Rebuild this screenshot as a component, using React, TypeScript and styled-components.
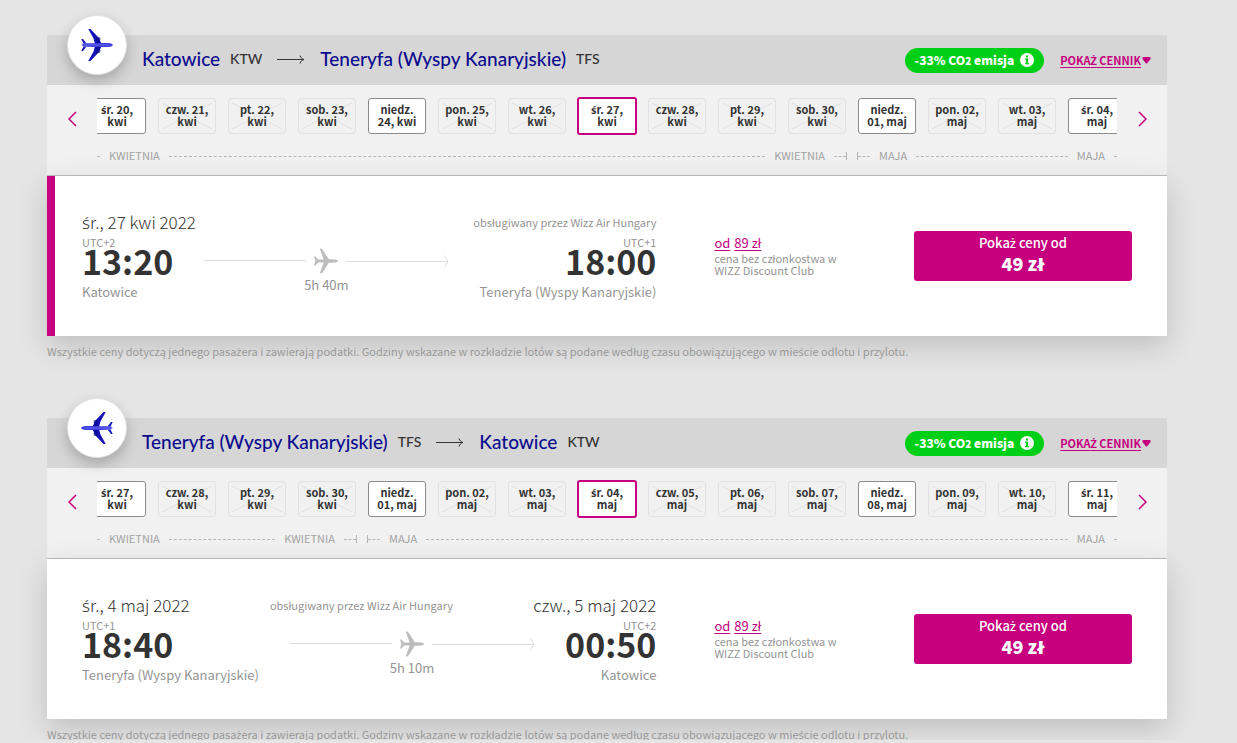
import React from "react";
import styled, { createGlobalStyle, css } from "styled-components";

const PINK = "#c6007e";
const NAVY = "#0b0b8f";
const SANS = `"Noto Sans CJK JP", "Noto Sans", sans-serif`;

const GlobalStyle = createGlobalStyle`
  * { box-sizing: border-box; }
  body {
    margin: 0;
    background: #e5e5e5;
    color: #333;
    font-family: ${SANS};
    font-size: 11px;
    line-height: 12px;
  }
  button { font-family: inherit; cursor: pointer; }
`;

const Page = styled.main`
  display: flex;
  flex-direction: column;
  gap: 61px;
  padding: 35px 70px 0 47px;
`;

const Panel = styled.section`
  position: relative;
`;

const PlaneBadge = styled.div`
  position: absolute;
  top: -20px;
  left: 20px;
  display: flex;
  align-items: center;
  justify-content: center;
  width: 60px;
  height: 60px;
  border: 1px solid #e3e3e3;
  border-radius: 50%;
  background: #fff;
  box-shadow: 0 6px 14px rgba(0, 0, 0, 0.22);
`;

const Header = styled.header`
  display: flex;
  align-items: center;
  justify-content: space-between;
  height: 50px;
  padding: 0 16px 0 95px;
  background: #d6d6d6;
`;

const Route = styled.h2`
  display: flex;
  align-items: center;
  gap: 10px;
  margin: 0;
  padding-bottom: 2px;
  font-family: Lato, sans-serif;
  font-weight: 500;
  font-size: 19px;
  line-height: 24px;
`;

const City = styled.span`
  color: ${NAVY};
`;

const Code = styled.span`
  font-size: 14px;
  font-weight: 500;
`;

const RouteArrow = styled.svg`
  margin: 0 5px;
`;

const HeaderActions = styled.div`
  display: flex;
  align-items: center;
  gap: 16px;
`;

const Emission = styled.div`
  display: flex;
  align-items: center;
  gap: 6px;
  height: 25px;
  padding: 0 10px;
  border-radius: 13px;
  background: #00cf17;
  color: #fff;
  font-weight: 900;
  font-size: 12px;
`;

const Small = styled.span`
  font-size: 10px;
`;

const PriceList = styled.a`
  display: flex;
  align-items: center;
  gap: 1px;
  color: ${PINK};
  font-weight: 700;
  font-size: 11px;
  text-decoration: none;
`;

const PriceListText = styled.span`
  text-decoration: underline;
  text-underline-offset: 2px;
  white-space: pre;
`;

const Calendar = styled.div`
  display: grid;
  grid-template-columns: 50px minmax(0, 1fr) 50px;
  height: 91px;
  border-bottom: 1px solid #bdbdbd;
  background: #f1f1f1;
`;

const PageButton = styled.button`
  align-self: start;
  display: flex;
  align-items: center;
  justify-content: center;
  height: 68px;
  padding: 0;
  border: 0;
  background: none;
`;

const Timeline = styled.div`
  overflow: hidden;
`;

const Days = styled.div`
  display: flex;
  align-items: center;
  justify-content: center;
  height: 62px;
`;

const DaySlot = styled.div`
  flex: 0 0 70px;
  display: flex;
  justify-content: center;
`;

type DayState = "off" | "on" | "selected";

const DayButton = styled.button<{ $state: DayState }>`
  position: relative;
  width: 58px;
  height: 36px;
  padding: 0 0 2px;
  border: 1px solid #8c8c8c;
  border-radius: 3px;
  background: #fff;
  color: #333;
  font-weight: 700;
  font-size: 11px;
  line-height: 12px;
  ${(p) =>
    p.$state === "off" &&
    css`
      border-color: #e2e2e2;
      background: #f1f1f1;
    `}
  ${(p) =>
    p.$state === "selected" &&
    css`
      width: 60px;
      height: 38px;
      border: 2px solid ${PINK};
    `}
`;

const Cross = styled.svg`
  position: absolute;
  inset: 4px 3px;
`;

const DayText = styled.span`
  position: relative;
  display: block;
`;

const Months = styled.div`
  display: flex;
  justify-content: center;
  height: 18px;
`;

const Month = styled.div<{ $days: number; $side: "start" | "end" }>`
  flex: 0 0 ${(p) => p.$days * 70}px;
  display: flex;
  align-items: center;
  gap: 9px;
  padding: ${(p) => (p.$side === "start" ? "0 5px 0 0" : "0 0 0 5px")};
  color: #a3a3a3;
  font-size: 11px;
`;

const MonthName = styled.span`
  padding-bottom: 2px;
`;

const Dash = styled.i<{ $width?: number; $cap?: "left" | "right" }>`
  flex: ${(p) => (p.$width ? `0 0 ${p.$width}px` : "1")};
  display: flex;
  align-items: center;
  height: 8px;
  ${(p) => p.$cap && `border-${p.$cap}: 1px solid #b3b3b3;`}
  &::before {
    content: "";
    flex: 1;
    border-top: 1px dashed #b8b8b8;
  }
`;

const Body = styled.div<{ $marked: boolean }>`
  position: relative;
  display: grid;
  grid-template-columns: minmax(0, 4fr) minmax(0, 1fr) 218px;
  column-gap: 57px;
  height: 160px;
  padding: 36px 35px 0;
  background: ${(p) => (p.$marked ? `linear-gradient(${PINK}, ${PINK}) left / 8px 100% no-repeat #fff` : "#fff")};
  box-shadow: 0 10px 28px rgba(0, 0, 0, 0.17);
`;

const FlightTop = styled.div`
  display: flex;
  align-items: center;
  justify-content: space-between;
  height: 20px;
`;

const FlightDate = styled.div`
  font-weight: 300;
  font-size: 17px;
  line-height: 20px;
`;

const Muted = styled.div`
  color: #949494;
  font-size: 11px;
  line-height: 12px;
`;

const FlightRow = styled.div`
  display: flex;
  justify-content: space-between;
  padding-top: 4px;
`;

const Stop = styled.div<{ $right?: boolean }>`
  text-align: ${(p) => (p.$right ? "right" : "left")};
`;

const Time = styled.div`
  font-weight: 700;
  font-size: 34px;
  line-height: 26px;
`;

const Place = styled.div`
  padding-top: 8px;
  color: #949494;
  font-size: 13px;
  line-height: 20px;
`;

const Track = styled.div`
  display: flex;
  flex-direction: column;
  align-items: center;
  padding-top: 12px;
`;

const TrackLine = styled.div`
  display: flex;
  align-items: center;
  gap: 8px;
  height: 26px;
`;

const Duration = styled(Muted)`
  font-size: 13px;
  line-height: 22px;
`;

const ClubPrice = styled.div`
  padding: 22px 0 0 1px;
`;

const ClubLink = styled.a`
  display: flex;
  gap: 4px;
  color: ${PINK};
  font-size: 13px;
  line-height: 18px;
  font-weight: 400;
  text-decoration: none;
  & > span { text-decoration: underline; text-underline-offset: 2px; }
`;

const ShowPrices = styled.button`
  display: flex;
  flex-direction: column;
  align-items: center;
  height: 50px;
  margin-top: 19px;
  padding: 3px 0 0;
  border: 0;
  border-radius: 3px;
  background: ${PINK};
  color: #fff;
  font-size: 13px;
  font-weight: 500;
  line-height: 18px;
`;

const Amount = styled.strong`
  font-size: 18px;
  font-weight: 900;
  line-height: 22px;
`;

const Note = styled.p`
  position: relative;
  margin: 0;
  padding-top: 9px;
  color: #999;
  font-size: 11px;
  line-height: 12px;
`;

const Accented = styled.span`
  font-family: "Noto Sans", sans-serif;
  line-height: 0;
`;

function Polish({ children }: { children: string }) {
  return (
    <>
      {children.split(/([śżćŻ])/).map((part, i) => (i % 2 ? <Accented key={i}>{part}</Accented> : part))}
    </>
  );
}

function BluePlane({ back }: { back?: boolean }) {
  return (
    <svg width="32" height="32" viewBox="0 0 32 32" aria-hidden="true">
      <g transform={back ? "matrix(-1 0 0 1 32 0)" : undefined}>
        <path d="M7.300 0H9.500L18 9 20.500 15H14L12.500 9.500ZM7.300 32H9.500L18 23 20.500 17H14L12.500 22.500Z" fill="#1414b8" />
        <path d="M14.500 8H18.500L19.500 9V11H18L20 15H16ZM14.500 24H18.500L19.500 23V21H18L20 17H16Z" fill="#07077d" opacity=".55" />
        <path d="M.3 10H2L5.500 14.500H2.500ZM.3 22H2L5.500 17.500H2.500Z" fill="#1414b8" />
        <path d="M1.500 14.500C9 14 22 13.800 27 14 30 14.300 32 15.200 32 16S30 17.700 27 18C22 18.200 9 18 1.500 17.200Z" fill="#3c3cdc" />
        <path d="M0 15.500H28V16.500H1Z" fill="#6b6bf5" />
      </g>
    </svg>
  );
}

function GreyPlane() {
  return (
    <svg width="24" height="26" viewBox="0 0 24 26" aria-hidden="true">
      <path
        fill="#bdbdbd"
        d="M0 8.500H1.400L4.200 11.600H9.700L5.800.8H8L14.800 11.200C17 11.200 19 11.200 21 11.400 23 11.700 24 12.400 24 13S23 14.300 21 14.600C19 14.800 17 14.800 14.800 14.800L8 25.200H5.800L9.700 14.400H4.200L1.400 17.500H0L1.400 13Z"
      />
    </svg>
  );
}

function Chevron({ back }: { back?: boolean }) {
  return (
    <svg width="9" height="16" viewBox="0 0 9 16" fill="none" stroke={PINK} strokeWidth="1.500" aria-hidden="true">
      <path d={back ? "M8 1 1 8l7 7" : "M1 1l7 7-7 7"} />
    </svg>
  );
}

type Leg = {
  from: [string, string];
  to: [string, string];
  back?: boolean;
  days: string[];
  split: number;
  date: string;
  arrivalDate?: string;
  times: [string, string];
  zones: [string, string];
  duration: string;
};

const legs: Leg[] = [
  {
    from: ["Katowice", "KTW"],
    to: ["Teneryfa (Wyspy Kanaryjskie)", "TFS"],
    days: [
      "śr. 20,|kwi", "czw. 21,|kwi", "pt. 22,|kwi", "sob. 23,|kwi", "niedz.|24, kwi",
      "pon. 25,|kwi", "wt. 26,|kwi", "śr. 27,|kwi", "czw. 28,|kwi", "pt. 29,|kwi",
      "sob. 30,|kwi", "niedz.|01, maj", "pon. 02,|maj", "wt. 03,|maj", "śr. 04,|maj",
    ],
    split: 11,
    date: "śr., 27 kwi 2022",
    times: ["13:20", "18:00"],
    zones: ["UTC+2", "UTC+1"],
    duration: "5h 40m",
  },
  {
    from: ["Teneryfa (Wyspy Kanaryjskie)", "TFS"],
    to: ["Katowice", "KTW"],
    back: true,
    days: [
      "śr. 27,|kwi", "czw. 28,|kwi", "pt. 29,|kwi", "sob. 30,|kwi", "niedz.|01, maj",
      "pon. 02,|maj", "wt. 03,|maj", "śr. 04,|maj", "czw. 05,|maj", "pt. 06,|maj",
      "sob. 07,|maj", "niedz.|08, maj", "pon. 09,|maj", "wt. 10,|maj", "śr. 11,|maj",
    ],
    split: 4,
    date: "śr., 4 maj 2022",
    arrivalDate: "czw., 5 maj 2022",
    times: ["18:40", "00:50"],
    zones: ["UTC+1", "UTC+2"],
    duration: "5h 10m",
  },
];

const dayState = (i: number): DayState =>
  i === 7 ? "selected" : [0, 4, 11, 14].includes(i) ? "on" : "off";

function FlightPanel({ leg }: { leg: Leg }) {
  return (
    <Panel>
      <Header>
        <Route>
          <City>{leg.from[0]}</City>
          <Code>{leg.from[1]}</Code>
          <RouteArrow width="28" height="10" viewBox="0 0 28 10" fill="none" stroke="#333" aria-hidden="true">
            <path d="M0 5.500H26.500M23 1.500c.8 2.400 2 3.400 4 4-2 .6-3.200 1.600-4 4" />
          </RouteArrow>
          <City>{leg.to[0]}</City>
          <Code>{leg.to[1]}</Code>
        </Route>
        <HeaderActions>
          <Emission>
            <span>-33% CO<Small>2</Small> emisja</span>
            <svg width="14" height="14" viewBox="0 0 14 14" aria-hidden="true">
              <circle cx="7" cy="7" r="7" fill="#fff" />
              <path d="M6 2.500h2v2H6zM5 5.500h3v4.500h1v1.300H5V10h1V6.800H5z" fill="#00cf17" />
            </svg>
          </Emission>
          <PriceList href="#cennik">
            <PriceListText><Polish>POKAŻ CENNIK</Polish></PriceListText>
            <svg width="9" height="7" viewBox="0 0 9 7" aria-hidden="true">
              <path d="M1 0H8Q9 .5 8.500 2L5 6.500H4L.5 2Q0 .5 1 0Z" fill={PINK} />
            </svg>
          </PriceList>
        </HeaderActions>
      </Header>
      <PlaneBadge>
        <BluePlane back={leg.back} />
      </PlaneBadge>
      <Calendar>
        <PageButton aria-label="Poprzednie dni"><Chevron back /></PageButton>
        <Timeline>
          <Days>
            {leg.days.map((day, i) => {
              const [first, second] = day.split("|");
              const state = dayState(i);
              return (
                <DaySlot key={day}>
                  <DayButton $state={state} disabled={state === "off"}>
                    {state === "off" && (
                      <Cross width="50" height="26" viewBox="0 0 50 26" stroke="#e0e0e0" aria-hidden="true">
                        <path d="M0 0 50 26M50 0 0 26" />
                      </Cross>
                    )}
                    <DayText><Polish>{first}</Polish></DayText>
                    <DayText>{second}</DayText>
                  </DayButton>
                </DaySlot>
              );
            })}
          </Days>
          <Months>
            <Month $days={leg.split} $side="start">
              <Dash $width={18} />
              <MonthName>KWIETNIA</MonthName>
              <Dash />
              <MonthName>KWIETNIA</MonthName>
              <Dash $width={13} $cap="right" />
            </Month>
            <Month $days={15 - leg.split} $side="end">
              <Dash $width={13} $cap="left" />
              <MonthName>MAJA</MonthName>
              <Dash />
              <MonthName>MAJA</MonthName>
              <Dash $width={18} />
            </Month>
          </Months>
        </Timeline>
        <PageButton aria-label="Następne dni"><Chevron /></PageButton>
      </Calendar>
      <Body $marked={!leg.back}>
        <div>
          <FlightTop>
            <FlightDate><Polish>{leg.date}</Polish></FlightDate>
            <Muted>obsługiwany przez Wizz Air Hungary</Muted>
            {leg.arrivalDate && <FlightDate>{leg.arrivalDate}</FlightDate>}
          </FlightTop>
          <FlightRow>
            <Stop>
              <Muted>{leg.zones[0]}</Muted>
              <Time>{leg.times[0]}</Time>
              <Place>{leg.from[0]}</Place>
            </Stop>
            <Track>
              <TrackLine>
                <svg width="102" height="2" viewBox="0 0 102 2" aria-hidden="true">
                  <path d="M0 .5H102" stroke="#dcdcdc" />
                </svg>
                <GreyPlane />
                <svg width="103" height="13" viewBox="0 0 103 13" fill="none" stroke="#dcdcdc" aria-hidden="true">
                  <path d="M0 6.500H102M98.500 .5 102 6.500 98.500 12.500" />
                </svg>
              </TrackLine>
              <Duration>{leg.duration}</Duration>
            </Track>
            <Stop $right>
              <Muted>{leg.zones[1]}</Muted>
              <Time>{leg.times[1]}</Time>
              <Place>{leg.to[0]}</Place>
            </Stop>
          </FlightRow>
        </div>
        <ClubPrice>
          <ClubLink href="#wdc"><span>od</span><span>89 zł</span></ClubLink>
          <Muted>cena bez członkostwa w WIZZ Discount Club</Muted>
        </ClubPrice>
        <ShowPrices>
          <span><Polish>Pokaż ceny od</Polish></span>
          <Amount>49 zł</Amount>
        </ShowPrices>
      </Body>
      <Note>
        <Polish>
          Wszystkie ceny dotyczą jednego pasażera i zawierają podatki. Godziny wskazane w rozkładzie lotów są podane według czasu obowiązującego w mieście odlotu i przylotu.
        </Polish>
      </Note>
    </Panel>
  );
}

export default function App() {
  return (
    <>
      <GlobalStyle />
      <Page>
        {legs.map((leg) => (
          <FlightPanel key={leg.date} leg={leg} />
        ))}
      </Page>
    </>
  );
}
